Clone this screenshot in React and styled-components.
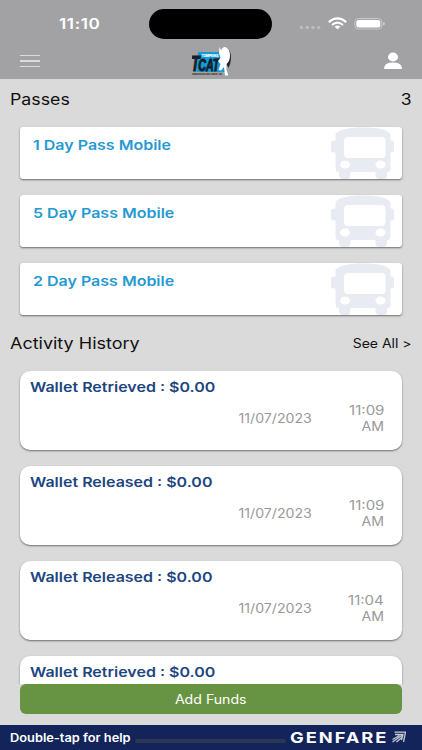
import React from 'react';
import styled, { createGlobalStyle } from 'styled-components';

const Global = createGlobalStyle`
  * { box-sizing: border-box; }
  body { margin: 0; background: #dadada; font-family: Inter, "Liberation Sans", sans-serif; }
`;

const Screen = styled.div`
  width: 422px;
  height: 750px;
  display: flex;
  flex-direction: column;
  overflow: hidden;
  position: relative;
  background: #dadada;
`;

const Label = styled.span`
  display: block;
  white-space: nowrap;
  font-size: ${(p) => p.$size}px;
  line-height: ${(p) => p.$line || 20}px;
  font-weight: ${(p) => p.$weight || 400};
  letter-spacing: ${(p) => p.$spacing || 0}px;
  color: ${(p) => p.$color || '#111'};
  transform: scaleX(${(p) => p.$stretch || 1.13});
  transform-origin: ${(p) => p.$origin || 'left'} center;
`;

const Header = styled.header`
  flex: none;
  height: 79px;
  background: #a2a2a4;
`;

const StatusBar = styled.div`
  height: 46px;
  display: grid;
  grid-template-columns: 149px 123px 1fr;
  padding-top: 9px;
`;

const Clock = styled.div`
  padding: 5px 0 0 59px;
`;

const Island = styled.div`
  height: 30px;
  border-radius: 15px;
  background: #000;
`;

const Signals = styled.div`
  padding: 7px 0 0 27px;
`;

const NavBar = styled.nav`
  height: 33px;
  display: flex;
  justify-content: space-between;
  padding: 0 20.5px 0 20px;
`;

const Burger = styled.div`
  width: 20px;
  height: 12px;
  margin-top: 9px;
  display: flex;
  flex-direction: column;
  justify-content: space-between;
`;

const Line = styled.i`
  height: 1.4px;
  background: #dcdcdd;
`;

const Logo = styled.svg`
  display: block;
  width: 40px;
  height: 31px;
`;

const Avatar = styled.svg`
  display: block;
  width: 18px;
  height: 17px;
  margin-top: 6px;
`;

const SectionHead = styled.div`
  flex: none;
  display: flex;
  justify-content: space-between;
  align-items: center;
  height: 20px;
  margin: ${(p) => p.$top}px 10.5px 0 10px;
`;

const Passes = styled.div`
  flex: none;
  display: flex;
  flex-direction: column;
  gap: 16px;
  margin: 17px 20px 0;
`;

const PassCard = styled.div`
  height: 52px;
  display: flex;
  justify-content: space-between;
  padding: 8px 7px 0 13px;
  border-radius: 3px;
  background: #fff;
  box-shadow: 0 1px 2px rgba(0, 0, 0, 0.5);
`;

const BusIcon = styled.svg`
  display: block;
  width: 64px;
  height: 52px;
  margin-top: -8px;
`;

const History = styled.div`
  flex: none;
  display: flex;
  flex-direction: column;
  gap: 16px;
  margin: 17px 20px 0;
`;

const Activity = styled.div`
  height: 79px;
  padding: 6px 18px 0 10px;
  border-radius: 10px;
  background: #fff;
  box-shadow: 0 1px 2px rgba(0, 0, 0, 0.5);
`;

const Meta = styled.div`
  display: flex;
  justify-content: flex-end;
  align-items: center;
  gap: 37.5px;
  margin-top: 6px;
`;

const Time = styled.div`
  width: 35px;
  display: flex;
  flex-direction: column;
  align-items: flex-end;
`;

const AddFunds = styled.button`
  position: absolute;
  left: 20px;
  top: 684px;
  width: 382px;
  height: 30px;
  display: flex;
  align-items: center;
  justify-content: center;
  border: 0;
  padding: 2px 0 0;
  border-radius: 6px;
  background: #679442;
  font-family: inherit;
`;

const Dock = styled.div`
  position: absolute;
  left: 0;
  bottom: 0;
  width: 422px;
  height: 66px;
  background: #dadada;
`;

const Footer = styled.footer`
  position: absolute;
  left: 0;
  bottom: 0;
  width: 422px;
  height: 25px;
  display: flex;
  align-items: center;
  padding-left: 10px;
  background: #122459;
`;

const Hint = styled.div`
  width: 125px;
`;

const HomeBar = styled.div`
  width: 151px;
  height: 4px;
  margin-top: 7px;
  border-radius: 2px;
  background: #2d3652;
`;

const Brand = styled.div`
  width: 101.5px;
  margin-left: 4px;
`;

const Arrow = styled.svg`
  width: 14px;
  height: 12px;
  margin-top: -1px;
`;

const passes = ['1 Day Pass Mobile', '5 Day Pass Mobile', '2 Day Pass Mobile'];
const activities = [
  ['Wallet Retrieved : $0.00', '11:09'],
  ['Wallet Released : $0.00', '11:09'],
  ['Wallet Released : $0.00', '11:04'],
  ['Wallet Retrieved : $0.00', '11:04'],
];

const Bus = () => (
  <BusIcon viewBox="0 0 64 52">
    <path fill="#e8ebf1" d="M4.500 8C5 3 17 .5 32 .5S59 3 59.500 8v5.500h1q2.500 0 2.500 2.500v7q0 2.500-2.500 2.500h-1V41q0 3-2 4H56v3q0 4-4 4h-3.500q-4 0-4-4v-3h-25v3q0 4-4 4H12q-4 0-4-4v-3H6.500q-2-1-2-4V25.500h-1Q0 25.500 0 23v-7q0-2.500 3.500-2.500h1z" />
    <rect x="13" y="10" width="41.500" height="21" rx="4" fill="#fff" />
    <ellipse cx="14" cy="37.500" rx="5" ry="4" fill="#fff" />
    <ellipse cx="49.500" cy="37.500" rx="5" ry="4" fill="#fff" />
  </BusIcon>
);

export default function App() {
  return (
    <Screen>
      <Global />
      <Header>
        <StatusBar>
          <Clock><Label $size={14} $weight={600} $color="#fff" $stretch={1.22} $spacing={0.5}>11:10</Label></Clock>
          <Island />
          <Signals>
            <svg width="90" height="16" viewBox="0 0 90 16" display="block">
              <g fill="#bdbdbf">
                <circle cx="2.500" cy="11.500" r="1.700" /><circle cx="8.200" cy="11.500" r="1.700" />
                <circle cx="14" cy="11.500" r="1.700" /><circle cx="19.700" cy="11.500" r="1.700" />
              </g>
              <g fill="none" stroke="#fff" strokeWidth="2.100">
                <path d="M29.800 6.100Q38.500-1.300 47.200 6.100" /><path d="M33 9Q38.500 4.300 44 9" />
              </g>
              <path fill="#fff" d="M35.600 10.700Q38.500 8.500 41.400 10.700L38.500 13.200z" />
              <rect x="55.800" y="2.500" width="27" height="10.500" rx="3.500" fill="none" stroke="#c9c9cb" />
              <rect x="57.300" y="4" width="24" height="7.500" rx="2.200" fill="#fff" />
              <path fill="#c9c9cb" d="M84 6q2 .3 2 1.800T84 9.600z" />
            </svg>
          </Signals>
        </StatusBar>
        <NavBar>
          <Burger><Line /><Line /><Line /></Burger>
          <Logo viewBox="0 0 40 31">
            <path fill="#159bd7" d="M6 6h27v20H4.500z" />
            <text x="9.500" y="10.600" fontSize="3.400" fontWeight="800" fill="#fff" textLength="17">TOMPKINS</text>
            <text y="25.500" transform="scale(.65 1)" fontFamily="Liberation Sans" fontStyle="italic" fontWeight="700" fill="#14202a" stroke="#14202a" strokeWidth="1">
              <tspan x="-2" fontSize="22.500">T</tspan><tspan x="9.500" fontSize="16.500">CAT</tspan>
            </text>
            <text x="0" y="29" fontSize="2.300" fontWeight="800" fill="#222" textLength="30.500" lengthAdjust="spacingAndGlyphs">CONSOLIDATED AREA TRANSIT, INC.</text>
            <path fill="#222" d="M33 1q6 2 6 11 0 5-2.500 10l-4-8z" />
            <path fill="#fff" d="M27.500 1l1.800 3.500Q30 .8 33.500 1q4.500 1.500 4.500 9 0 5-3.500 8v6l1.500 4v1.500h-3L32 21l-3 3.500-2.500-.5 2-6-2.500-3 2.500-3-1.500-5z" />
          </Logo>
          <Avatar viewBox="0 0 18 17">
            <ellipse cx="9" cy="5" rx="5" ry="4.400" fill="#fff" />
            <path fill="#fff" d="M.2 17v-1.500Q1 10.400 9 10.400t8.800 5.100V17z" />
          </Avatar>
        </NavBar>
      </Header>

      <SectionHead $top={11}>
        <Label $size={15.5} $stretch={1.145}>Passes</Label>
        <Label $size={15.5} $origin="right">3</Label>
      </SectionHead>
      <Passes>
        {passes.map((name) => (
          <PassCard key={name}>
            <Label $size={13.5} $weight={600} $stretch={1.185} $color="#2699d2">{name}</Label>
            <Bus />
          </PassCard>
        ))}
      </Passes>

      <SectionHead $top={19}>
        <Label $size={15.5} $stretch={1.16}>Activity History</Label>
        <Label $size={12.5} $stretch={1.12} $origin="right">See All &gt;</Label>
      </SectionHead>
      <History>
        {activities.map(([title, time], i) => (
          <Activity key={i}>
            <Label $size={13.5} $weight={600} $stretch={1.185} $color="#1d467f">{title}</Label>
            <Meta>
              <Label $size={12.5} $origin="right" $color="#999">11/07/2023</Label>
              <Time>
                <Label $size={12.5} $line={16} $stretch={1.2} $origin="right" $color="#999">{time}</Label>
                <Label $size={12.5} $line={16} $origin="right" $color="#999">AM</Label>
              </Time>
            </Meta>
          </Activity>
        ))}
      </History>

      <Dock />
      <AddFunds><Label $size={12.5} $origin="center" $color="#fff">Add Funds</Label></AddFunds>
      <Footer>
        <Hint><Label $size={11.5} $weight={600} $stretch={1.115} $color="#fff">Double-tap for help</Label></Hint>
        <HomeBar />
        <Brand><Label $size={15} $weight={700} $stretch={1.22} $spacing={1.6} $color="#fff">GENFARE</Label></Brand>
        <Arrow viewBox="0 0 14 12">
          <path fill="none" stroke="#c3c8d8" strokeWidth="1.300" d="M2.500 1.200h11L11.500 11M3 3.500h8L9.500 9M.5 8.500l7-4M.5 11l10-7M4.500 11l6-5" />
        </Arrow>
      </Footer>
    </Screen>
  );
}
